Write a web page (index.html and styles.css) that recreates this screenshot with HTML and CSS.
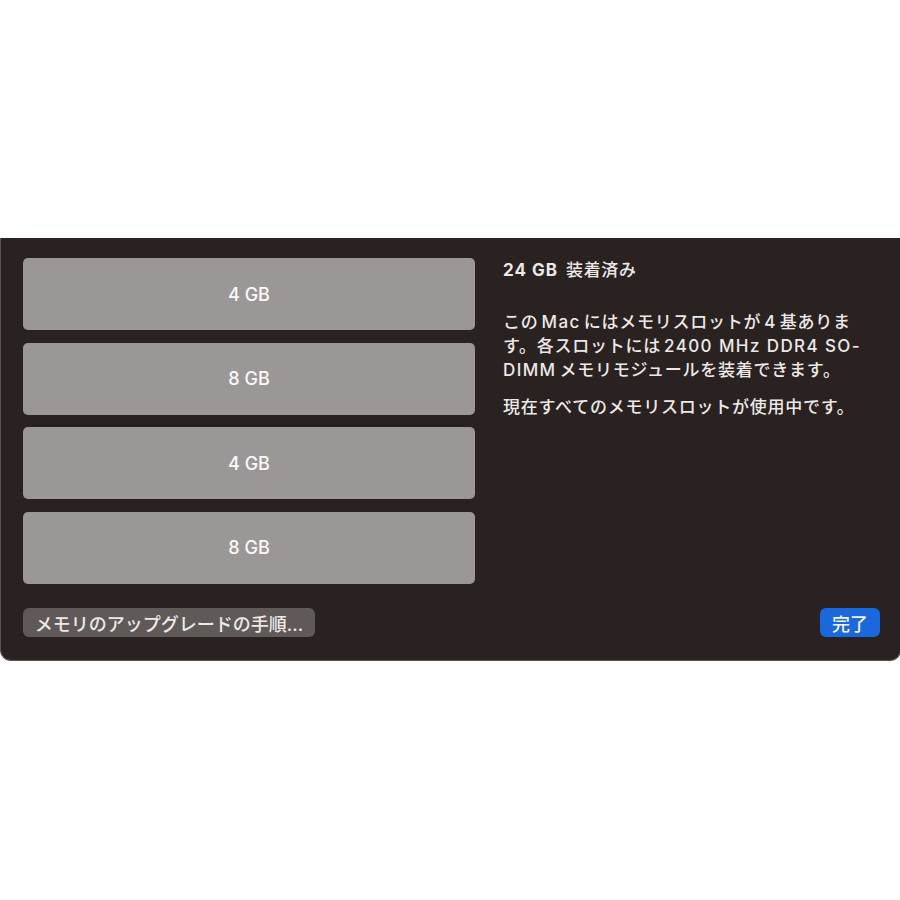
FILE: index.html
```html
<!DOCTYPE html>
<html lang="ja">
<head>
<meta charset="utf-8">
<link rel="stylesheet" href="styles.css">
</head>
<body>
<div class="panel">
  <div class="main">
    <div class="slots">
      <div class="slot">4 GB</div>
      <div class="slot">8 GB</div>
      <div class="slot">4 GB</div>
      <div class="slot">8 GB</div>
    </div>
    <div class="info">
      <div class="title"><b>24 GB</b> 装着済み</div>
      <p class="para">この<span class="lat">Mac</span>にはメモリスロットが<span class="lat">4</span>基ありま<br>す。各スロットには<span class="lat">2400 MHz DDR4 SO-</span><br><span class="lat first">DIMM</span>メモリモジュールを装着できます。</p>
      <p class="para">現在すべてのメモリスロットが使用中です。</p>
    </div>
  </div>
  <div class="footer">
    <button class="btn-secondary">メモリのアップグレードの手順...</button>
    <button class="btn-primary">完了</button>
  </div>
</div>
</body>
</html>
```
FILE: styles.css
```css
html, body {
  margin: 0;
  padding: 0;
  background: #ffffff;
}
body {
  font-family: "Inter", "Noto Sans CJK JP", sans-serif;
  width: 900px;
  height: 900px;
  overflow: hidden;
}
.panel {
  margin-top: 238px;
  height: 422px;
  width: 899px;
  background: #2a2220;
  border: 1px solid #5b5553;
  border-top: none;
  border-radius: 0 0 11px 11px;
  box-sizing: content-box;
  display: flex;
  flex-direction: column;
}
.main {
  display: flex;
  padding: 20px 0 0 22px;
}
.slots {
  width: 452px;
  display: flex;
  flex-direction: column;
  gap: 12.5px;
}
.slot {
  height: 72px;
  background: #9c9797;
  border-radius: 5px;
  color: #fbfafa;
  font-size: 18px;
  font-weight: 500;
  display: flex;
  align-items: center;
  justify-content: center;
}
.info {
  margin-left: 28px;
  color: #ece9e8;
  font-size: 17px;
  font-weight: 500;
}
.title {
  font-size: 17px;
  line-height: 24px;
  font-weight: 500;
  letter-spacing: 0.6px;
}
.title b {
  font-weight: 700;
  margin-right: 3px;
  letter-spacing: 1px;
}
.para {
  margin: 0;
  line-height: 24px;
  white-space: nowrap;
  letter-spacing: 0.75px;
}
.lat {
  margin: 0 3px;
  letter-spacing: 1.4px;
}
.lat.first {
  margin-left: 0;
}
.title + .para {
  margin-top: 28px;
}
.para + .para {
  margin-top: 13px;
}
.footer {
  margin-top: auto;
  display: flex;
  justify-content: space-between;
  align-items: center;
  padding: 0 20px 23px 22px;
}
button {
  font-family: "Inter", "Noto Sans CJK JP", sans-serif;
  border: none;
  height: 29px;
  border-radius: 6px;
  font-size: 18px;
  font-weight: 500;
  padding: 0;
}
.btn-secondary {
  width: 292px;
  background: #5f5a58;
  color: #ece9e8;
}
.btn-primary {
  width: 60px;
  background: #1b67dc;
  color: #f2f5fb;
}
```
